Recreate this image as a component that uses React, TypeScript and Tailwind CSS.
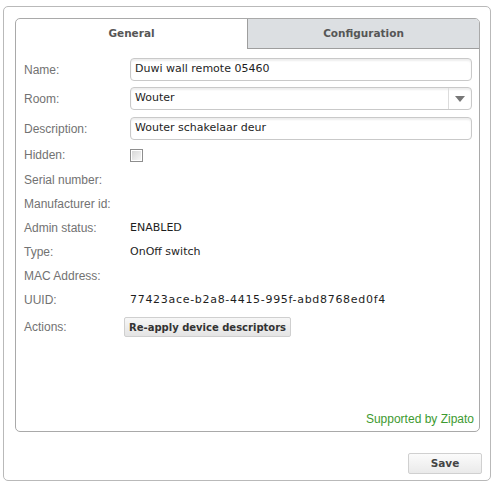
import type { ReactNode } from 'react';

const label = "font-['Liberation_Sans',Arial,sans-serif] text-[12px] text-[#727272]";
const value = "font-['DejaVu_Sans',Verdana,sans-serif] text-[11px] text-[#1e1e1e]";

function Row({ name, h, className, children }: { name: string; h: string; className?: string; children?: ReactNode }) {
  return (
    <div className={`flex items-center ${h} ${className ?? ''}`}>
      <div className={`w-[106px] shrink-0 ${label}`}>{name}</div>
      <div className="flex-1 flex items-center">{children}</div>
    </div>
  );
}

function TextInput({ text }: { text: string }) {
  return (
    <div
      className={`h-[23px] w-[342px] flex items-center pl-[4px] border border-[#c9c9c9] rounded-[4px] bg-white shadow-[inset_0_2px_2px_rgba(0,0,0,0.07)] ${value}`}
    >
      {text}
    </div>
  );
}

function SelectBox({ text }: { text: string }) {
  return (
    <div
      className={`h-[23px] w-[342px] flex items-stretch border border-[#c9c9c9] rounded-[4px] bg-white shadow-[inset_0_2px_2px_rgba(0,0,0,0.07)] ${value}`}
    >
      <div className="flex-1 flex items-center pl-[4px]">{text}</div>
      <div className="w-[23px] border-l border-[#dcdcdc] flex items-center justify-center">
        <svg width="10" height="6" viewBox="0 0 10 6">
          <path d="M0 0H10L5 6Z" fill="#777" />
        </svg>
      </div>
    </div>
  );
}

export default function App() {
  return (
    <div className="w-[497px] h-[487px] bg-white pt-[6px] pl-[3px]">
      <div className="w-[488px] h-[475px] border border-[#b9b9b9] rounded-[5px] pt-[11px] pl-[11px] pr-[8px] flex flex-col">
        {/* device panel */}
        <div className="w-[465px] h-[414px] border border-[#a9a9a9] rounded-[5px] flex flex-col">
          <div className="flex h-[30px] shrink-0">
            <div className="w-[231px] flex items-center justify-center font-['DejaVu_Sans',Verdana,sans-serif] font-bold text-[10.5px] text-[#565656]">
              General
            </div>
            <div className="flex-1 flex items-center justify-center bg-[#dcdfe2] border-l border-b border-[#9e9e9e] rounded-tr-[4px] font-['DejaVu_Sans',Verdana,sans-serif] font-bold text-[10.5px] text-[#565656]">
              Configuration
            </div>
          </div>

          <div className="flex-1 flex flex-col pl-[8px]">
            <Row name="Name:" h="h-[23px]" className="mt-[9px]">
              <TextInput text="Duwi wall remote 05460" />
            </Row>
            <Row name="Room:" h="h-[23px]" className="mt-[6px]">
              <SelectBox text="Wouter" />
            </Row>
            <Row name="Description:" h="h-[23px]" className="mt-[7px]">
              <TextInput text="Wouter schakelaar deur" />
            </Row>
            <Row name="Hidden:" h="h-[26px]" className="mt-[2px]">
              <div className="w-[13px] h-[13px] border border-[#8e8e8e] p-[1px] bg-white">
                <div className="w-full h-full bg-gradient-to-br from-[#d8d8d8] to-[#f7f7f7]" />
              </div>
            </Row>
            <Row name="Serial number:" h="h-[24px]" />
            <Row name="Manufacturer id:" h="h-[24px]" />
            <Row name="Admin status:" h="h-[24px]">
              <span className={value}>ENABLED</span>
            </Row>
            <Row name="Type:" h="h-[24px]">
              <span className={value}>OnOff switch</span>
            </Row>
            <Row name="MAC Address:" h="h-[24px]" />
            <Row name="UUID:" h="h-[24px]">
              <span className={`${value} tracking-[0.7px]`}>77423ace-b2a8-4415-995f-abd8768ed0f4</span>
            </Row>
            <Row name="Actions:" h="h-[30px]">
              <button className="-ml-[6px] h-[20px] px-[4px] border border-[#cfcfcf] rounded-[2px] bg-gradient-to-b from-[#f7f7f7] to-[#e4e4e4] font-['DejaVu_Sans',Verdana,sans-serif] font-bold text-[10px] text-[#333]">
                Re-apply device descriptors
              </button>
            </Row>
          </div>

          <div className="flex justify-end pr-[5px] pb-[5px] font-['Liberation_Sans',Arial,sans-serif] text-[12px] leading-[14px] text-[#3d9a30]">
            Supported by Zipato
          </div>
        </div>

        <div className="flex justify-end mt-[21px]">
          <button className="w-[74px] h-[21px] border border-[#d0d0d0] rounded-[2px] bg-gradient-to-b from-[#fbfbfb] to-[#eaeaea] font-['DejaVu_Sans',Verdana,sans-serif] font-bold text-[10.5px] text-[#444]">
            Save
          </button>
        </div>
      </div>
    </div>
  );
}
